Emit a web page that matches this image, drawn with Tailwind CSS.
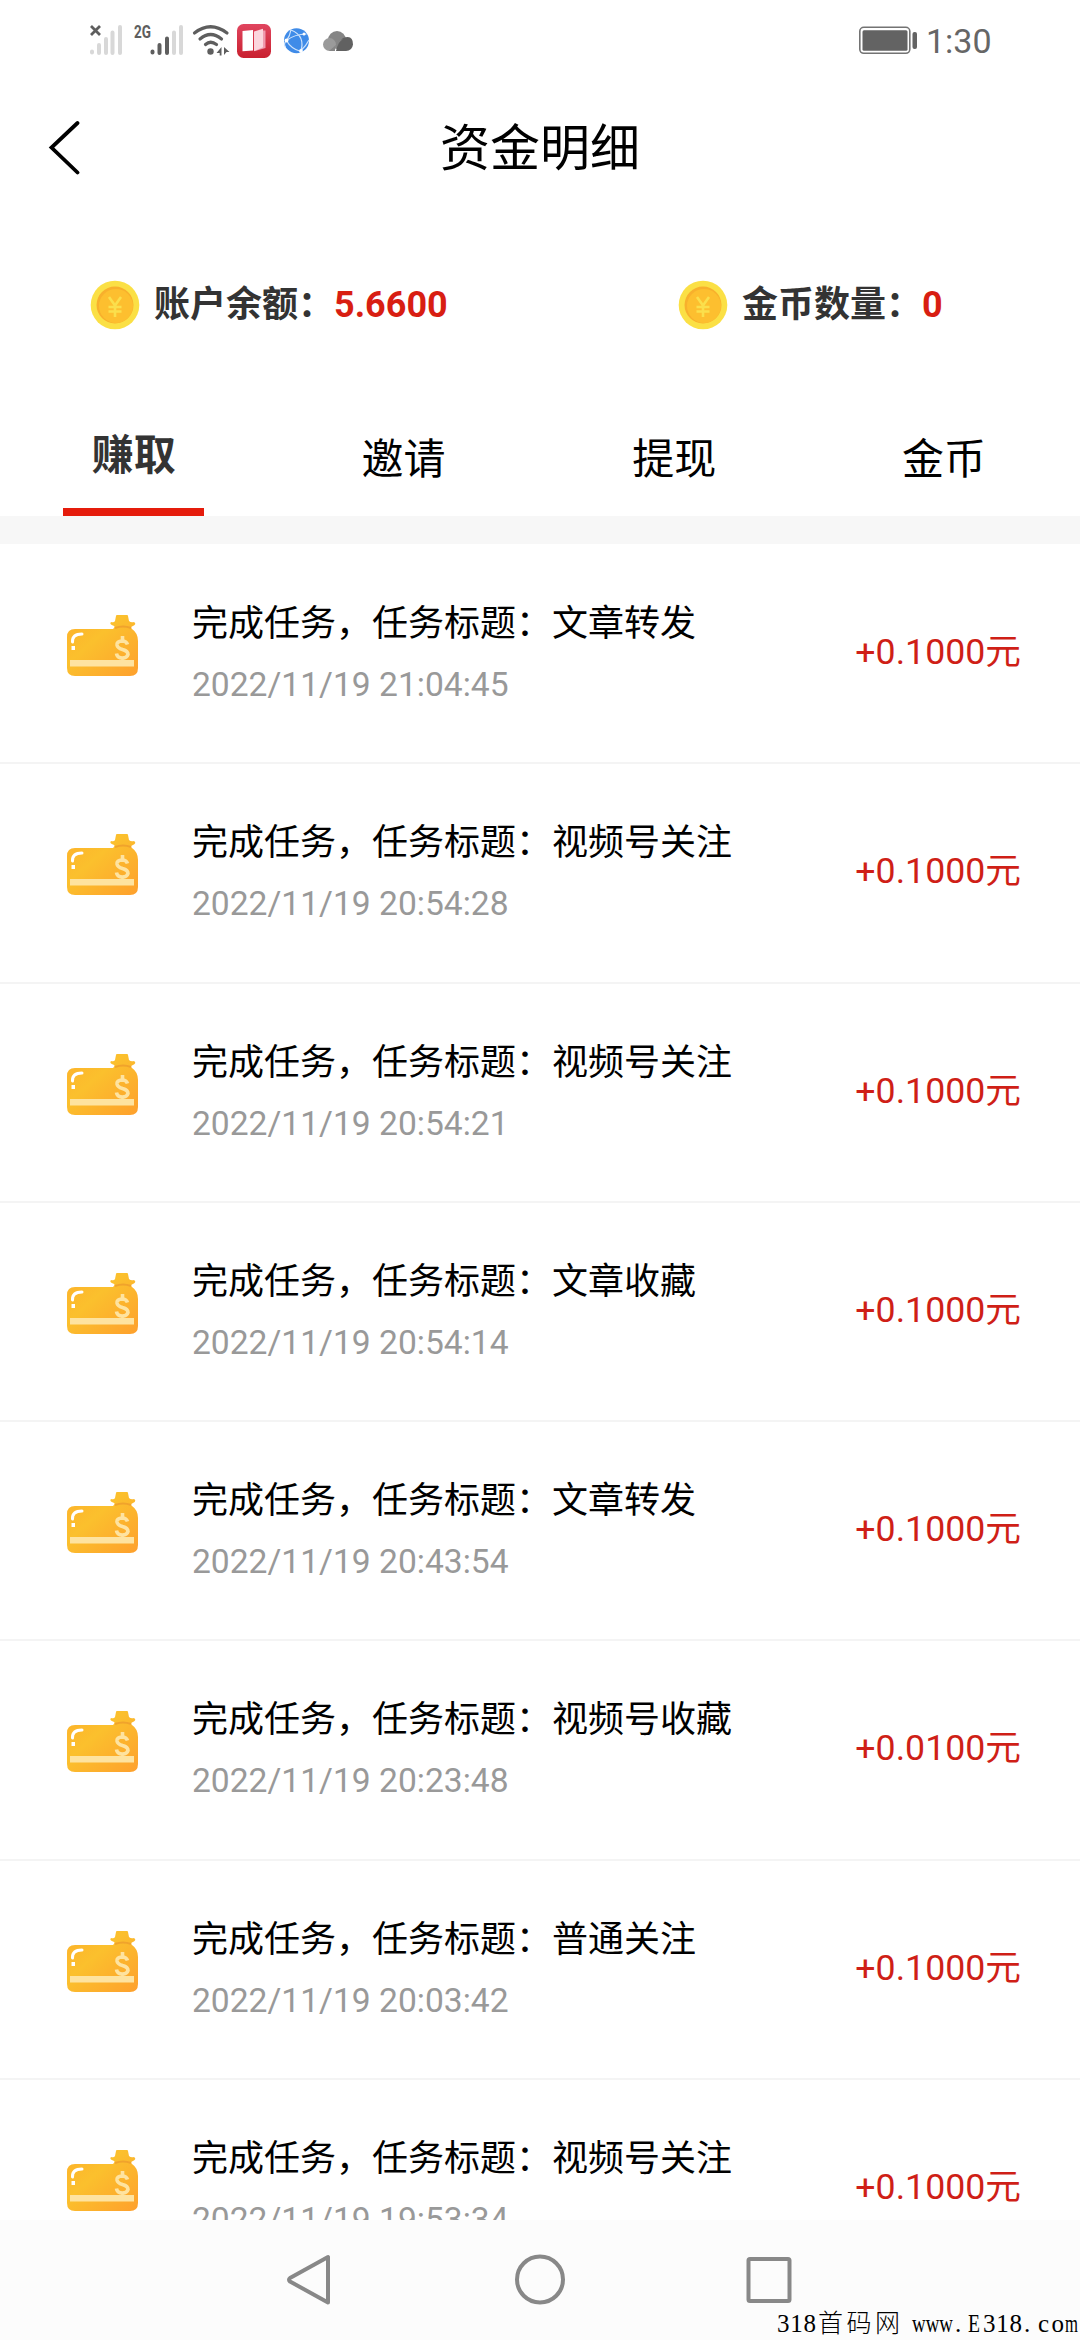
<!DOCTYPE html>
<html lang="zh-CN">
<head>
<meta charset="utf-8">
<title>资金明细</title>
<script src="https://cdn.jsdelivr.net/npm/@tailwindcss/browser@4"></script>
</head>
<body class="bg-white">
<svg width="0" height="0" class="absolute">
  <defs>
    <linearGradient id="gold" x1="0" y1="0" x2="1" y2="1"><stop offset="0" stop-color="#fdb02b"/><stop offset=".4" stop-color="#fbc02d"/><stop offset="1" stop-color="#fea02d"/></linearGradient>
    <linearGradient id="red" x1="0" y1="0" x2="0" y2="1"><stop offset="0" stop-color="#e0455f"/><stop offset="1" stop-color="#c9202f"/></linearGradient>
    <symbol id="coin" viewBox="0 0 50 50">
      <circle cx="25" cy="25" r="24.3" fill="#fbe045"/>
      <circle cx="25" cy="25" r="18.5" fill="#f8b02c"/>
      <circle cx="26" cy="26" r="17" fill="#fdbf2f"/>
      <path d="M19 17l6 8.500 6-8.500M25 25v12M18.500 27h13M18.500 31.500h13" fill="none" stroke="#fbdf4c" stroke-width="2.600"/>
    </symbol>
    <symbol id="wallet" viewBox="0 0 72 62">
      <path d="M8 14H46C48 12 48 11 46 10.500Q42 9 44 7Q47 8 48 6L49 1Q49 0 50 0H60Q61 0 61 1L62 6Q64 8 67 7Q70 9 66 11Q63 12 65 14Q71 18 71 26V53Q71 61 63 61H8Q0 61 0 53V22Q0 14 8 14Z" fill="url(#gold)"/>
      <path d="M48 13Q56 10 64 13" fill="none" stroke="#f0a32c" stroke-width="2"/>
      <path d="M5.500 27Q5 19 15 19" fill="none" stroke="#fff" stroke-width="3" stroke-linecap="round"/>
      <path d="M4.500 31h3.500v4H4.500z" fill="#fff"/>
      <path d="M3 45H67V51.500H3z" fill="#fee3a0"/>
      <path d="M60.500 29.500Q59.500 26 55 26Q49.500 26.500 50 30Q50.500 33 55.500 34.500Q61 36 61 39.500Q60 43 55.500 43Q50 43 49.500 38.500M55.500 21v6M55.500 42v4" fill="none" stroke="#fee3a0" stroke-width="3.600"/>
    </symbol>
  </defs>
</svg>
<div class="relative flex h-[2340px] w-[1080px] flex-col overflow-hidden bg-white font-[Roboto,'Noto_Sans_CJK_SC',sans-serif] text-black">

  <!-- status bar -->
  <div class="flex h-20 shrink-0 items-center">
    <svg width="370" height="80" viewBox="0 0 370 80">
      <g stroke-linecap="round" stroke-width="4" stroke="#d8d8d8">
        <path d="M92 51.500v1M99 45v8M106 39v14M112.500 32.500v20.500M120 27v26"/>
        <path d="M174 32.500v20.500M181 27v26"/>
        <path d="M152.500 51.500v1M159.500 45v8M167 38.500v14.500" stroke="#5e5e5e"/>
      </g>
      <path d="M91 26l9 9M100 26l-9 9" stroke="#5e5e5e" stroke-width="2.800"/>
      <text x="134" y="38" font-size="18" font-weight="700" fill="#5e5e5e" textLength="17" lengthAdjust="spacingAndGlyphs">2G</text>
      <g fill="none" stroke="#5e5e5e" stroke-width="3.200" stroke-linecap="round">
        <path d="M194.500 33Q210.500 20.500 227 33M200 39Q210.500 30 221.500 39M205.500 44.500Q210.500 40 216.500 44.500"/>
      </g>
      <circle cx="210.500" cy="51.500" r="3.200" fill="#5e5e5e"/>
      <path d="M221.500 47v8.500h-1.800v-2.500h-3.200zM224 47l5.500 5h-3l-2.500 3z" fill="#5e5e5e"/>
      <rect x="237" y="24" width="34" height="34" rx="6.500" fill="url(#red)"/>
      <path d="M242.500 31l10.500-1v20.500l-10.500.800z" fill="#fff"/>
      <path d="M263 30.500h2.500v17.500l-10.500 3z" fill="#f09aae"/>
      <path d="M254 31.500l9-2.800v18.500l-9 4z" fill="#fbd5dd"/>
      <circle cx="296.500" cy="40.700" r="12.500" fill="#3f8be8"/>
      <path d="M291 29.500Q290 36 286.500 40.500Q291 49 301 51.500M286.500 40.500Q283 44 285.500 47M286.500 40.500Q295 34 306.500 34M291 30Q306 36 300.500 52M301 50.500Q306 46 309 40" fill="none" stroke="#cfe3fb" stroke-width="1.200"/>
      <circle cx="286.500" cy="40.500" r="1.900" fill="#fff"/><circle cx="301" cy="51" r="1.900" fill="#fff"/><circle cx="304" cy="34" r="1.500" fill="#fff"/>
      <circle cx="337" cy="40" r="9" fill="#858585"/>
      <path d="M336 51Q338 42 343 38Q353 34 353 44.500Q352 51 346 51z" fill="#616161"/>
      <circle cx="329.500" cy="44.500" r="6.500" fill="#9a9a9a"/>
      <path d="M329 51L343 39Q335 41 335 51z" fill="#858585"/>
    </svg>
    <svg width="62" height="80" viewBox="858 0 62 80" class="ml-[488px]">
      <rect x="859.800" y="27.300" width="50" height="26" rx="4" fill="none" stroke="#737373" stroke-width="1.600"/>
      <rect x="862.500" y="30.300" width="45" height="20.500" rx="1.500" fill="#636363"/>
      <rect x="912.500" y="32" width="4.500" height="17" rx="2" fill="#636363"/>
    </svg>
    <span class="ml-[6px] pt-[2px] text-[34px] leading-10 text-[#666]">1:30</span>
  </div>

  <!-- title bar -->
  <header class="grid h-[132px] shrink-0 grid-cols-3 items-center">
    <svg width="40" height="60" viewBox="0 0 40 60" class="mb-[2px] ml-[45px]"><path d="M32.500 8L6.500 32.500L32.500 57.500" fill="none" stroke="#000" stroke-width="3.800" stroke-linecap="round"/></svg>
    <h1 class="pt-[5px] text-center text-[50px] leading-[72px]">资金明细</h1>
  </header>

  <!-- balances -->
  <section class="grid h-[186px] shrink-0 grid-cols-[588px_1fr] items-center pl-[90px] text-4xl font-bold leading-[52px] text-[#333]">
    <div class="flex items-center"><svg width="50" height="50"><use href="#coin"/></svg><span class="ml-3.5">账户余额：</span><span class="text-[#d81e12]">5.6600</span></div>
    <div class="flex items-center"><svg width="50" height="50"><use href="#coin"/></svg><span class="ml-3.5">金币数量：</span><span class="text-[#d81e12]">0</span></div>
  </section>

  <!-- tabs -->
  <nav class="grid h-[118px] shrink-0 grid-cols-4 pr-[1px] text-center text-[42px] leading-[60px]">
    <div class="flex flex-col items-center justify-between pr-[2px] pt-[28px] font-bold text-[#333]"><span>赚取</span><i class="block h-2 w-[141px] bg-[#e51c0c]"></i></div>
    <div class="pr-[2px] pt-[32px]">邀请</div>
    <div class="pt-[32px]">提现</div>
    <div class="pt-[32px]">金币</div>
  </nav>
  <div class="h-[28px] shrink-0 bg-[#f7f7f7]"></div>

  <!-- records -->
  <main id="list" class="min-h-0 flex-1 overflow-hidden pt-px"></main>

  <!-- system navigation -->
  <footer class="relative h-[120px] shrink-0 bg-[#fcfcfc]">
    <svg width="1080" height="120" viewBox="0 0 1080 120" fill="none" stroke="#888" stroke-width="4" stroke-linejoin="round">
      <path d="M328 37V82.500L290 61.500Q288 59.500 290 58z"/>
      <circle cx="540" cy="59.500" r="23"/>
      <rect x="748.500" y="39" width="41" height="42" rx="1.500"/>
    </svg>
    <div class="absolute bottom-0 left-[776px] flex h-[32px] whitespace-nowrap">
      <svg width="304" height="32" viewBox="0 0 304 32" font-size="25" fill="#000" class="font-['Liberation_Serif','Noto_Sans_CJK_SC',serif]">
        <text x="1" y="24" textLength="39" lengthAdjust="spacing">318</text>
        <text x="42" y="24" textLength="82" lengthAdjust="spacing" class="font-['Noto_Sans_CJK_SC',sans-serif] font-light">首码网</text>
        <text x="136" y="24" textLength="41" lengthAdjust="spacingAndGlyphs">www</text>
        <text x="179" y="24">.</text>
        <text x="192" y="24" textLength="12" lengthAdjust="spacingAndGlyphs">E</text>
        <text x="207" y="24" textLength="39" lengthAdjust="spacing">318</text>
        <text x="248" y="24">.</text>
        <text x="262" y="24" textLength="26" lengthAdjust="spacing">co</text>
        <text x="289" y="24" textLength="13" lengthAdjust="spacingAndGlyphs">m</text>
      </svg>
    </div>
  </footer>
</div>
<script>
const records = [
  ['文章转发', '2022/11/19 21:04:45', '+0.1000元'],
  ['视频号关注', '2022/11/19 20:54:28', '+0.1000元'],
  ['视频号关注', '2022/11/19 20:54:21', '+0.1000元'],
  ['文章收藏', '2022/11/19 20:54:14', '+0.1000元'],
  ['文章转发', '2022/11/19 20:43:54', '+0.1000元'],
  ['视频号收藏', '2022/11/19 20:23:48', '+0.0100元'],
  ['普通关注', '2022/11/19 20:03:42', '+0.1000元'],
  ['视频号关注', '2022/11/19 19:53:34', '+0.1000元']
];
document.getElementById('list').innerHTML = records.map(([name, time, amount]) => `
  <article class="flex h-[219.300px] border-b-2 border-[#f4f4f4] pl-[67px] pr-[59px]">
    <svg width="72" height="62" class="mt-[70px] shrink-0"><use href="#wallet"/></svg>
    <div class="ml-[53px] flex-1 pt-[53px]">
      <div class="text-4xl leading-[52px]">完成任务，任务标题：${name}</div>
      <div class="mt-[15px] text-[33.600px] leading-10 text-[#999]">${time}</div>
    </div>
    <div class="pt-[81px] text-[35.700px] leading-[52px] text-[#cf1f17]">${amount}</div>
  </article>`).join('');
</script>
</body>
</html>
